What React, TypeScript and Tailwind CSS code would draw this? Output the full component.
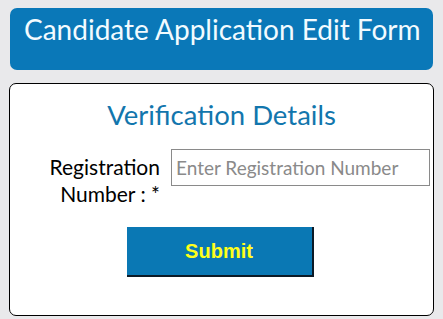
const App = () => {
  return (
    <div className="min-h-[319px] bg-[#e9e9eb] px-[9px] pt-[8px] pb-[3px] font-['Lato','Open_Sans',sans-serif]">
      <div className="mx-[1px] h-[62px] rounded-[7px] bg-[#0a78b8] pl-[14px] pt-[4px]">
        <h1 className="text-[28px] leading-[34px] text-[#f2fbff]">
          Candidate Application Edit Form
        </h1>
      </div>
      <div className="mt-[13px] h-[233px] rounded-[7px] border border-black bg-white">
        <h2 className="pt-[14px] text-center text-[27.5px] leading-[34px] text-[#1276ad]">
          Verification Details
        </h2>
        <div className="mt-[17px] flex items-start">
          <label className="w-[150px] pt-[4px] text-right text-[21px] leading-[27px] text-black">
            Registration
            <br />
            Number : *
          </label>
          <input
            type="text"
            placeholder="Enter Registration Number"
            className="ml-[11px] h-[37px] w-[259px] border border-[#8a8a8a] px-[4px] text-[19px] text-black placeholder:text-[#8a8a8a] outline-none"
          />
        </div>
        <div className="mt-[20px] flex justify-center">
          <button className="ml-[-3px] h-[50px] w-[187px] border-r-2 border-b-2 border-[#0b1a26] bg-[#0a78b4] font-['Liberation_Sans',Arial,sans-serif] text-[20px] font-bold text-[#ffff1a]">
            Submit
          </button>
        </div>
      </div>
    </div>
  );
};

export default App;
